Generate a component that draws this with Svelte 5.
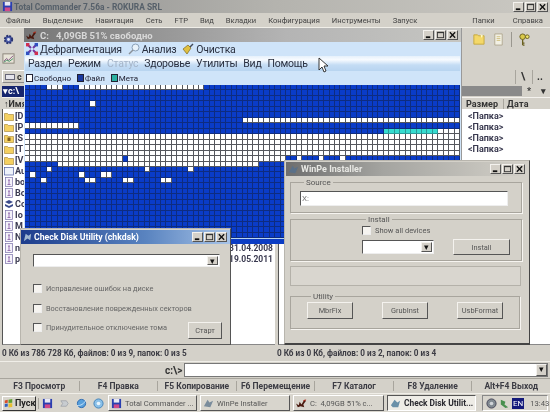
<script>
  // white cell ranges per row of the disk map, the rest is blue
  const whites = {
    0: [[4, 6], [10, 32]],
    3: [[12, 12]],
    6: [[40, 79]],
    7: [[0, 9]],
    8: [[76, 79]],
    9: [[0, 79]],
    10: [[0, 79]],
    11: [[0, 79]],
    12: [[0, 79]],
    13: [[0, 17], [19, 47], [50, 50], [54, 54], [58, 58]],
    14: [[6, 42]],
    15: [[4, 4], [22, 22], [30, 30]],
    16: [[1, 1], [10, 10], [14, 15]],
    17: [[3, 3], [11, 12], [18, 19], [25, 26]]
  };

  function kind(r, c) {
    if (r === 8 && c >= 66 && c <= 75) return 'meta';
    const ranges = whites[r] || [];
    return ranges.some(([a, b]) => c >= a && c <= b) ? 'free' : 'file';
  }

  const cells = [];
  for (let r = 0; r < 28; r++) {
    for (let c = 0; c < 80; c++) cells.push(kind(r, c));
  }

  const menu = ['Файлы', 'Выделение', 'Навигация', 'Сеть', 'FTP', 'Вид', 'Вкладки', 'Конфигурация', 'Инструменты', 'Запуск'];
  const leftRows = [
    ['folder', '[D'], ['folder', '[P'], ['lock', '[S'], ['folder', '[T'], ['folder', '[V'],
    ['blank', 'Au'], ['file', 'bo'], ['file', 'Bo'], ['gear', 'Co'], ['file', 'Io'],
    ['file', 'M'], ['file', 'N'], ['file', 'n'], ['file', 'p']
  ];
  const dates = { 12: '31.04.2008', 13: '19.05.2011' };
  const fkeys = ['F3 Просмотр', 'F4 Правка', 'F5 Копирование', 'F6 Перемещение', 'F7 Каталог', 'F8 Удаление', 'Alt+F4 Выход'];
  const defragMenu = ['Раздел', 'Режим', 'Статус', 'Здоровье', 'Утилиты', 'Вид', 'Помощь'];
</script>

{#snippet winBtns()}
  <div class="win-btns">
    <span class="wb"><svg viewBox="0 0 10 9"><rect x="2" y="6" width="5" height="2" fill="#111" /></svg></span>
    <span class="wb"><svg viewBox="0 0 10 9"><rect x="1.5" y="1.5" width="7" height="6" fill="none" stroke="#333" /><rect x="1.5" y="1" width="7" height="1.4" fill="#333" /></svg></span>
    <span class="wb"><svg viewBox="0 0 10 9"><path d="M2 1.5l6 6M8 1.5l-6 6" stroke="#111" stroke-width="1.5" /></svg></span>
  </div>
{/snippet}

{#snippet floppy()}
  <svg class="ico" viewBox="0 0 12 12"><rect x="1" y="1" width="10" height="10" fill="#2a3fb0" /><rect x="3" y="1" width="6" height="4" fill="#e8e8f4" /><rect x="3" y="7" width="6" height="4" fill="#d04a8a" /></svg>
{/snippet}

{#snippet batIcon()}
  <svg class="ico" viewBox="0 0 12 10"><path d="M0 5L3 7L4 3L6 6L9 1L11 2L8 6L9 9L5 8L2 9z" fill="#4a1a10" /><path d="M8 2l3-1" stroke="#c03020" /></svg>
{/snippet}

{#snippet fileIcon(type)}
  <svg class="row-ico" viewBox="0 0 10 10">
    {#if type === 'folder' || type === 'lock'}
      <path d="M0.5 2.5h3l1 1h5v6h-9z" fill="#f4d060" stroke="#a08030" stroke-width="0.6" />
      {#if type === 'lock'}<rect x="3.5" y="4.5" width="3" height="3.5" fill="#806020" />{/if}
    {:else if type === 'blank'}
      <rect x="0.5" y="1.5" width="9" height="7.5" fill="#eef2fa" stroke="#5060a0" stroke-width="0.7" />
    {:else if type === 'gear'}
      <path d="M1 3l4-2 4 2-4 2zM1 5l4 2 4-2v2l-4 2-4-2z" fill="#3a4a8a" />
    {:else}
      <rect x="1.5" y="0.5" width="7" height="9" fill="#f4f2fa" stroke="#7a70a8" stroke-width="0.7" />
      <path d="M4 3h2M5 3v4M3.5 7.5h3" stroke="#8050a0" stroke-width="0.8" />
    {/if}
  </svg>
{/snippet}

<div class="desktop">
  <div class="tc">
    <header class="titlebar">
      {@render floppy()}
      <span class="title">Total Commander 7.56a - ROKURA SRL</span>
      {@render winBtns()}
    </header>

    <nav class="menu">
      {#each menu as item}<span>{item}</span>{/each}
      <span class="menu-right">Папки</span>
      <span>Справка</span>
    </nav>

    <div class="toolbar">
      <div class="tool-row">
        <svg class="tool" viewBox="0 0 14 14"><circle cx="7" cy="7" r="4" fill="#4a5aa8" stroke="#2a3470" stroke-width="2" stroke-dasharray="2 1.2" /><circle cx="7" cy="7" r="1.6" fill="#e0e4f0" /></svg>
        <svg class="tool push" viewBox="0 0 14 14"><path d="M2 2h4l1 1h6v9H2z" fill="#f4d868" stroke="#c4a840" /><path d="M9 1l3 2-2 2z" fill="#fff8c0" /></svg>
        <svg class="tool" viewBox="0 0 14 14"><path d="M3 1h8v12H3z" fill="#f2f0e4" stroke="#b0a890" /><path d="M5 4h4M5 6h4M5 8h4" stroke="#d0c080" /></svg>
        <span class="tool-sep"></span>
        <svg class="tool" viewBox="0 0 14 14"><circle cx="5" cy="4" r="3" fill="#d8c84a" stroke="#6a6020" /><path d="M5 7v6M5 11h2M5 13h2" stroke="#6a6020" stroke-width="1.4" /><circle cx="10" cy="4" r="2" fill="#eee26a" stroke="#6a6020" /></svg>
      </div>
      <div class="tool-row">
        <svg class="tool" viewBox="0 0 14 14"><rect x="1" y="2" width="12" height="10" fill="#e8e4d8" stroke="#8a8478" /><path d="M2 10l3-3 2 2 5-5" stroke="#805080" fill="none" /><path d="M2 11l3-2 3 1 4-3" stroke="#409060" fill="none" /></svg>
      </div>
    </div>

    <div class="panels">
      <section class="panel left">
        <div class="drive-row"><span class="drive"><svg viewBox="0 0 10 6"><rect x="0.5" y="0.5" width="9" height="5" fill="#e4e4ec" stroke="#667" /></svg>c</span></div>
        <div class="path-row"><span class="path">▾c:\</span></div>
        <div class="head-row"><span class="sort">↑Имя</span></div>
        <div class="list">
          {#each leftRows as [type, name], i}
            <div class="row">
              {@render fileIcon(type)}
              <span class="name">{name}</span>
              {#if dates[i]}<span class="date">{dates[i]}</span>{/if}
            </div>
          {/each}
        </div>
      </section>

      <section class="panel right">
        <div class="drive-row end">
          <span class="mini">\</span>
          <span class="mini">..</span>
        </div>
        <div class="path-row"><span class="gray-path"></span><span class="mini low">*</span><span class="mini low">▾</span></div>
        <div class="head-row"><span class="col-size">Размер</span><span class="col-date">Дата</span></div>
        <div class="list">
          {#each [0, 1, 2, 3] as _}
            <div class="row"><span class="size">&lt;Папка&gt;</span></div>
          {/each}
        </div>
      </section>
    </div>

    <div class="status">
      <span>0 Кб из 786 728 Кб, файлов: 0 из 9, папок: 0 из 5</span>
      <span>0 Кб из 0 Кб, файлов: 0 из 2, папок: 0 из 4</span>
    </div>

    <div class="cmd">
      <span class="prompt">c:\&gt;</span>
      <div class="cmd-input"><span class="arrow-btn">▾</span></div>
    </div>

    <div class="fkeys">
      {#each fkeys as key}<span>{key}</span>{/each}
    </div>
  </div>

  <footer class="taskbar">
    <span class="start">
      <svg class="ico" viewBox="0 0 12 12"><path d="M1 2l4-1v4l-4 .5z" fill="#d8502a" /><path d="M6 1l5-1v5l-5 .3z" fill="#60a030" /><path d="M1 6.5l4-.5v4l-4 .6z" fill="#3060c0" /><path d="M6 6l5-.2v5l-5 .5z" fill="#e8c030" /></svg>
      Пуск
    </span>
    <span class="quick">
      {@render floppy()}
      <svg class="ico" viewBox="0 0 12 12"><path d="M2 3h6l2 3-2 3H2l2-3z" fill="#c8ccd0" stroke="#8a9098" stroke-width="0.6" /></svg>
      <svg class="ico" viewBox="0 0 12 12"><circle cx="6" cy="6" r="4.5" fill="#58a0dc" stroke="#2a68b0" /><path d="M1 8c4 1 8-2 10-6" stroke="#d0e8f8" fill="none" /></svg>
      <svg class="ico" viewBox="0 0 12 12"><circle cx="6" cy="6" r="5" fill="#8ac0e8" stroke="#4080b8" /><circle cx="6" cy="6" r="2" fill="#e8f4fc" /></svg>
    </span>
    <span class="task tc-task">{@render floppy()}<span>Total Commander ...</span></span>
    <span class="task pe-task"><svg class="ico" viewBox="0 0 12 12"><path d="M1 9l4-7 2 3 4-2-3 7z" fill="#7a8c9c" /></svg><span>WinPe Installer</span></span>
    <span class="task c-task">{@render batIcon()}<span>C: &nbsp;4,09GB 51% с...</span></span>
    <span class="task chk-task"><svg class="ico" viewBox="0 0 12 12"><path d="M1 8l4-6 3 3 3-2-2 7H3z" fill="#6a90a8" /></svg><span>Check Disk Utilit...</span></span>
    <span class="tray">
      <svg class="ico" viewBox="0 0 12 12"><circle cx="6" cy="6" r="5" fill="#808890" stroke="#445" /><circle cx="6" cy="6" r="2" fill="#d0d4d8" /></svg>
      <svg class="ico" viewBox="0 0 12 12"><path d="M2 2l5 2-1 3 4 3-3 1-5-4z" fill="#4a9050" /></svg>
      <span class="lang">EN</span>
      <span class="clock">13:43</span>
    </span>
  </footer>

  <!-- floating windows -->
  <div class="window defrag">
    <div class="win-title gray">
      {@render batIcon()}
      <span>C: &nbsp;&nbsp;4,09GB 51% свободно</span>
      {@render winBtns()}
    </div>
    <div class="defrag-tools">
      <svg class="big-ico" viewBox="0 0 12 12"><path d="M2 2l3 3M10 2L7 5M2 10l3-3M10 10L7 7" stroke="#7038a0" stroke-width="2" /><rect x="0" y="0" width="3.4" height="3.4" fill="#d03050" /><rect x="8.6" y="0" width="3.4" height="3.4" fill="#3050c0" /><rect x="0" y="8.6" width="3.4" height="3.4" fill="#3050c0" /><rect x="8.6" y="8.6" width="3.4" height="3.4" fill="#d03050" /></svg>
      <span>Дефрагментация</span>
      <svg class="big-ico gap" viewBox="0 0 12 12"><circle cx="7.5" cy="4.5" r="3.5" fill="#e8f2fa" stroke="#8aa0b8" /><path d="M5 7L1 11" stroke="#8a9098" stroke-width="1.5" /></svg>
      <span>Анализ</span>
      <svg class="big-ico gap" viewBox="0 0 12 12"><path d="M1 6l5-4 3 3-4 6z" fill="#e0c040" stroke="#806a20" stroke-width="0.7" /><path d="M8 4l3-3" stroke="#404858" stroke-width="1.5" /></svg>
      <span>Очистка</span>
    </div>
    <div class="defrag-menu">
      {#each defragMenu as item}<span class:off={item === 'Статус'}>{item}</span>{/each}
    </div>
    <div class="legend">
      <span class="key"><i class="swatch s-free"></i>Свободно</span>
      <span class="key"><i class="swatch s-file"></i>Файл</span>
      <span class="key"><i class="swatch s-meta"></i>Мета</span>
    </div>
    <div class="map">
      {#each cells as c}<div class="cell {c}"></div>{/each}
    </div>
    <div class="map-end"></div>
  </div>

  <div class="window winpe">
    <div class="win-title gray-pe">
      <svg class="ico" viewBox="0 0 12 12"><path d="M1 9l4-7 2 3 4-2-3 7z" fill="#5a7088" /></svg>
      <span>WinPe Installer</span>
      {@render winBtns()}
    </div>
    <fieldset class="source">
      <legend>Source</legend>
      <div class="input source-input">X:</div>
    </fieldset>
    <fieldset class="install">
      <legend>Install</legend>
      <div class="install-col">
        <label class="check"><i class="box"></i>Show all devices</label>
        <div class="input combo small"><span class="arrow-btn">▾</span></div>
      </div>
      <span class="btn install-btn">Install</span>
    </fieldset>
    <div class="blank-box"></div>
    <fieldset class="utility">
      <legend>Utility</legend>
      <span class="btn">MbrFix</span>
      <span class="btn">GrubInst</span>
      <span class="btn">UsbFormat</span>
    </fieldset>
  </div>

  <div class="window chk">
    <div class="win-title blue">
      <svg class="ico" viewBox="0 0 12 12"><path d="M2 10l2-8 3 2 3-2-1 7-3-2z" fill="#a0b8d0" /></svg>
      <span>Check Disk Utility (chkdsk)</span>
      {@render winBtns()}
    </div>
    <div class="chk-body">
      <div class="input combo wide"><span class="arrow-btn">▾</span></div>
      <label class="check"><i class="box"></i>Исправление ошибок на диске</label>
      <label class="check"><i class="box"></i>Восстановление поврежденных секторов</label>
      <div class="last-row">
        <label class="check"><i class="box"></i>Принудительное отключение тома</label>
        <span class="btn start-btn">Старт</span>
      </div>
    </div>
  </div>

  <svg class="cursor" viewBox="0 0 11 16"><path d="M1 1v12l3-3 2 5 2-1-2-5h4z" fill="#fff" stroke="#222" stroke-width="0.9" /></svg>
</div>

<style>
  :global(body) {
    margin: 0;
    background: #d4d0c8;
  }

  .desktop {
    position: relative;
    width: 550px;
    height: 412px;
    overflow: hidden;
    display: flex;
    flex-direction: column;
    background: #d4d1c9;
    font-family: Roboto, "Liberation Sans", sans-serif;
    color: #333;
    filter: blur(0.3px);
  }

  .tc {
    flex: 1;
    display: flex;
    flex-direction: column;
    min-height: 0;
  }

  .ico {
    width: 11px;
    height: 11px;
    flex: none;
  }

  .titlebar {
    height: 13px;
    display: flex;
    align-items: center;
    gap: 1px;
    padding: 0 2px;
    background: linear-gradient(90deg, #8d8d8d, #b4b3ae 50%, #cbc9c3);
    font-size: 8.4px;
    font-weight: bold;
    color: #56606a;
  }

  .win-btns {
    margin-left: auto;
    display: flex;
    gap: 1px;
  }

  .wb {
    width: 11px;
    height: 10px;
    background: #d4d0c8;
    border: 1px solid;
    border-color: #f4f2ee #555 #555 #f4f2ee;
    box-sizing: border-box;
    display: flex;
  }

  .wb svg {
    width: 100%;
    height: 100%;
  }

  .menu {
    height: 14px;
    display: flex;
    align-items: center;
    gap: 12px;
    padding: 0 7px 0 6px;
    font-size: 7.6px;
    color: #444;
  }

  .menu-right {
    margin-left: auto;
    margin-right: 6px;
  }

  .toolbar {
    height: 41px;
    display: flex;
    flex-direction: column;
    border-top: 1px solid #f0eee8;
    box-sizing: border-box;
    padding: 2px 0 0 1px;
    background: #d4d1c9;
  }

  .tool-row {
    height: 20px;
    display: flex;
    align-items: center;
    gap: 5px;
    padding-right: 18px;
  }

  .tool {
    width: 13px;
    height: 13px;
    margin: 0 1px;
    flex: none;
  }

  .push {
    margin-left: auto;
  }

  .tool-sep {
    width: 1px;
    height: 15px;
    background: #9a978f;
  }

  .panels {
    flex: 1;
    display: flex;
    min-height: 0;
  }

  .panel {
    width: 275px;
    display: flex;
    flex-direction: column;
    box-sizing: border-box;
    padding: 0 0 0 2px;
    min-height: 0;
  }

  .panel.right {
    padding-left: 3px;
  }

  .drive-row {
    height: 17px;
    display: flex;
    align-items: center;
    gap: 1px;
    box-sizing: border-box;
  }

  .drive-row.end {
    justify-content: flex-end;
    padding-right: 3px;
    gap: 2px;
  }

  .drive {
    display: flex;
    align-items: center;
    gap: 2px;
    width: 24px;
    height: 13px;
    box-sizing: border-box;
    padding-left: 2px;
    border: 1px solid;
    border-color: #fff #888 #888 #fff;
    font-size: 9px;
    font-weight: bold;
  }

  .drive svg {
    width: 10px;
    height: 6px;
  }

  .mini {
    width: 14px;
    height: 14px;
    display: flex;
    align-items: center;
    justify-content: center;
    font-size: 10px;
    font-weight: bold;
    border-left: 1px solid #a8a59d;
  }

  .mini.low {
    height: 11px;
    border: none;
    font-size: 9px;
  }

  .path-row {
    height: 12px;
    display: flex;
    align-items: center;
    gap: 0;
  }

  .path {
    width: 22px;
    height: 11px;
    background: #15256e;
    color: #fff;
    font-size: 9px;
    font-weight: bold;
    line-height: 11px;
    padding-left: 1px;
    box-sizing: border-box;
    overflow: hidden;
    white-space: nowrap;
  }

  .gray-path {
    flex: 1;
    height: 10px;
    background: #8a8a8a;
  }

  .head-row {
    height: 12px;
    display: flex;
    align-items: center;
    font-size: 9px;
    font-weight: bold;
    border-top: 1px solid #f4f2ee;
    box-sizing: border-box;
  }

  .sort {
    padding-left: 2px;
  }

  .col-size {
    margin-left: 188px;
    width: 37px;
  }

  .col-date {
    border-left: 1px solid #a8a59d;
    padding-left: 3px;
    letter-spacing: 0.3px;
  }

  .list {
    flex: 1;
    min-height: 0;
    background: #fff;
    border-left: 1px solid #555;
    border-bottom: 1px solid #888;
    box-sizing: border-box;
    overflow: hidden;
    padding-top: 1px;
  }

  .row {
    height: 11px;
    display: flex;
    align-items: center;
    gap: 1px;
    padding-left: 1px;
    font-size: 9px;
    font-weight: bold;
    color: #3a3a50;
    white-space: nowrap;
  }

  .row-ico {
    width: 10px;
    height: 10px;
    flex: none;
  }

  .date {
    margin-left: auto;
    margin-right: 2px;
    font-size: 8.5px;
  }

  .size {
    margin-left: 188px;
  }

  .status {
    height: 16px;
    display: flex;
    align-items: center;
    font-size: 8.2px;
    font-weight: bold;
    color: #3c3c44;
  }

  .status span {
    width: 275px;
    padding-left: 2px;
    box-sizing: border-box;
    white-space: nowrap;
  }

  .cmd {
    height: 18px;
    display: flex;
    align-items: center;
    gap: 2px;
    padding: 0 2px 0 165px;
    border-top: 1px solid #f0eee8;
    border-bottom: 1px solid #a8a59d;
    box-sizing: border-box;
  }

  .prompt {
    font-size: 10px;
    font-weight: bold;
  }

  .cmd-input {
    flex: 1;
    height: 14px;
    background: #fff;
    border: 1px solid #777;
    box-sizing: border-box;
    display: flex;
    justify-content: flex-end;
  }

  .arrow-btn {
    width: 11px;
    background: #d4d0c8;
    border: 1px solid;
    border-color: #f4f2ee #555 #555 #f4f2ee;
    box-sizing: border-box;
    font-size: 9px;
    line-height: 9px;
    text-align: center;
    color: #111;
  }

  .fkeys {
    height: 14px;
    display: grid;
    grid-template-columns: repeat(7, 1fr);
    align-items: center;
    text-align: center;
    font-size: 8.5px;
    font-weight: bold;
    color: #3c3c44;
    white-space: nowrap;
  }

  .fkeys span + span {
    border-left: 1px solid #a8a59d;
  }

  .taskbar {
    height: 19px;
    display: flex;
    align-items: center;
    padding: 0 2px;
    box-sizing: border-box;
    background: #d8d5cd;
    border-top: 1px solid #f0eee8;
    font-size: 7.6px;
    color: #555;
    flex: none;
  }

  .start {
    width: 34px;
    height: 15px;
    flex: none;
    display: flex;
    align-items: center;
    gap: 2px;
    padding-left: 1px;
    border: 1px solid;
    border-color: #fff #333 #333 #fff;
    box-sizing: border-box;
    font-weight: bold;
    font-size: 9px;
    color: #222;
  }

  .start .ico {
    width: 9px;
    height: 9px;
  }

  .quick {
    display: flex;
    flex: none;
    gap: 6px;
    margin-left: 2px;
    padding-left: 3px;
    border-left: 1px solid #a8a59d;
    width: 70px;
    box-sizing: border-box;
  }

  .task {
    height: 16px;
    margin-right: 3px;
    flex: none;
    display: flex;
    align-items: center;
    gap: 3px;
    padding-left: 2px;
    box-sizing: border-box;
    border: 1px solid;
    border-color: #fff #555 #555 #fff;
    white-space: nowrap;
    overflow: hidden;
  }

  .tc-task,
  .chk-task {
    width: 89px;
  }

  .pe-task {
    width: 90px;
  }

  .c-task {
    width: 91px;
    margin-right: 3px;
  }

  .chk-task {
    background: #eeece6;
    border-color: #555 #fff #fff #555;
    font-weight: bold;
    font-size: 8.4px;
    color: #2a2a30;
  }

  .tray {
    margin-left: auto;
    width: 66px;
    height: 16px;
    flex: none;
    box-sizing: border-box;
    display: flex;
    align-items: center;
    gap: 2px;
    padding-left: 3px;
    border: 1px solid;
    border-color: #888 #fff #fff #888;
  }

  .lang {
    background: #141a7a;
    color: #fff;
    font-size: 8px;
    padding: 1px;
  }

  .clock {
    margin-left: 4px;
  }

  /* floating windows */
  .window {
    position: absolute;
    box-sizing: border-box;
    background: #d4d1c9;
    display: flex;
    flex-direction: column;
  }

  .win-title {
    height: 14px;
    flex: none;
    display: flex;
    align-items: center;
    gap: 3px;
    padding: 0 3px 0 2px;
    font-size: 8.7px;
    font-weight: bold;
    color: #fff;
    white-space: nowrap;
  }

  .gray {
    background: linear-gradient(90deg, #767676, #b4b4b4 60%, #c6c6c2);
    color: #d8d8d8;
    font-size: 9.5px;
  }

  .gray-pe {
    background: linear-gradient(90deg, #6e6e6e, #a4a4a0 40%, #d4d1c9);
    color: #e8e8e4;
    font-size: 9px;
    gap: 2px;
  }

  .blue {
    background: linear-gradient(90deg, #1c3c8c, #5a84c0 60%, #a8c4e8);
    gap: 1px;
    padding-left: 1px;
  }

  .defrag {
    left: 24px;
    top: 28px;
    width: 438px;
    height: 216px;
    padding: 0 1px;
    border-right: 1px solid #999;
    background: #d0e4f8;
  }

  .defrag .win-title {
    margin: 0 -1px;
  }

  .defrag-tools {
    height: 14px;
    display: flex;
    align-items: center;
    gap: 1px;
    padding-left: 1px;
    font-size: 10.5px;
    letter-spacing: -0.25px;
    color: #2a3040;
    background: #cfe4f9;
  }

  .big-ico {
    width: 12px;
    height: 12px;
    margin-right: 1px;
    flex: none;
  }

  .big-ico.gap {
    margin-left: 5px;
  }

  .defrag-menu {
    height: 15px;
    display: flex;
    align-items: center;
    gap: 6px;
    padding-left: 3px;
    font-size: 10.5px;
    letter-spacing: -0.25px;
    color: #2a3040;
    background: linear-gradient(#e6f1fb, #f8fbff 25%, #c4dcf4 60%, #b8d4f0);
  }

  .off {
    color: #a4b4c8;
  }

  .legend {
    height: 14px;
    display: flex;
    align-items: center;
    gap: 6px;
    padding-left: 1px;
    font-size: 8px;
    color: #223;
    background: #cfe4f9;
  }

  .key {
    display: flex;
    align-items: center;
    gap: 1px;
  }

  .swatch {
    width: 5px;
    height: 6px;
    border: 1px solid #223;
  }

  .s-free {
    background: #fff;
  }

  .s-file {
    background: #1a3aa0;
  }

  .s-meta {
    background: #2ab0a0;
  }

  .map {
    height: 153px;
    display: grid;
    grid-template-columns: repeat(80, 1fr);
    grid-template-rows: repeat(28, 1fr);
  }

  .cell {
    box-sizing: border-box;
    border-right: 1px solid;
    border-bottom: 1px solid;
    min-width: 0;
    min-height: 0;
  }

  .file {
    background: #0a3cc8;
    border-color: #0e2c80;
  }

  .free {
    background: #fff;
    border-color: #55575d;
  }

  .meta {
    background: #35dcd0;
    border-color: #2a9a98;
  }

  .map-end {
    height: 5px;
    border-top: 1px solid #b8d4f0;
    background: #0b3cc4;
  }

  .winpe {
    left: 284px;
    top: 160px;
    width: 246px;
    height: 185px;
    padding: 1px 7px 0 5px;
    border: 1px solid;
    border-width: 1px 1px 2px 1px;
    border-color: #b8b5ad #444 #444 #b8b5ad;
  }

  .winpe .win-title {
    margin: 0 -6px 0 -4px;
  }

  fieldset {
    box-sizing: border-box;
    margin: 0;
    padding: 0;
    border: 1px solid #a8a59d;
    box-shadow: 1px 1px 0 #f6f4f0;
    min-width: 0;
    flex: none;
  }

  fieldset legend {
    font-size: 8px;
    padding: 0 2px;
    margin-left: 4px;
    color: #555;
    line-height: 9px;
  }

  .source {
    margin-top: 2px;
    height: 35px;
    padding: 4px 13px 0 9px;
  }

  .input {
    background: #fff;
    border: 1px solid;
    border-color: #555 #eee #eee #555;
    box-sizing: border-box;
    font-size: 8px;
    color: #777;
  }

  .source-input {
    height: 15px;
    padding: 2px 1px;
  }

  .install {
    margin-top: 2px;
    height: 46px;
    display: flex;
    padding: 1px 11px 0 71px;
    justify-content: space-between;
  }

  .install-col {
    display: flex;
    flex-direction: column;
    gap: 5px;
  }

  .check {
    display: flex;
    align-items: center;
    gap: 4px;
    font-size: 7.5px;
    color: #555;
    white-space: nowrap;
    height: 10px;
  }

  .box {
    box-sizing: border-box;
    width: 9px;
    height: 9px;
    background: #f6f4f0;
    border: 1px solid;
    border-color: #555 #eee #eee #555;
    flex: none;
  }

  .combo {
    display: flex;
    justify-content: flex-end;
    padding: 1px;
  }

  .small {
    width: 72px;
    height: 14px;
  }

  .wide {
    width: 187px;
    height: 13px;
  }

  .btn {
    display: flex;
    align-items: center;
    justify-content: center;
    box-sizing: border-box;
    background: #d4d1c9;
    border: 1px solid;
    border-color: #f4f2ee #555 #555 #f4f2ee;
    font-size: 7.4px;
    color: #555;
  }

  .install-btn {
    width: 57px;
    height: 16px;
    margin-top: 14px;
  }

  .blank-box {
    margin: 5px 1px 0 0;
    height: 20px;
    background: #d9d6cf;
    border: 1px solid #b4b1a9;
    box-sizing: border-box;
    flex: none;
  }

  .utility {
    margin-top: 6px;
    height: 37px;
    display: flex;
    padding: 0 16px;
    justify-content: space-between;
    margin-right: 2px;
  }

  .utility .btn {
    width: 46px;
    height: 17px;
    margin-top: 1px;
  }

  .chk {
    left: 20px;
    top: 228px;
    width: 211px;
    height: 117px;
    padding-top: 1px;
    border-right: 1px solid #555;
    border-bottom: 1px solid #555;
    border-top: 1px solid #b8b5ad;
    border-left: 1px solid #b8b5ad;
  }

  .chk-body {
    flex: 1;
    display: flex;
    flex-direction: column;
    padding: 10px 8px 0 12px;
    gap: 9.5px;
  }

  .chk-body .check {
    font-size: 7.4px;
    color: #666;
  }

  .chk-body .wide {
    margin-bottom: 7px;
  }

  .last-row {
    display: flex;
    justify-content: space-between;
    align-items: flex-start;
  }

  .start-btn {
    width: 34px;
    height: 17px;
    margin-top: -1px;
  }

  .cursor {
    position: absolute;
    left: 318px;
    top: 57px;
    width: 11px;
    height: 16px;
  }
</style>
